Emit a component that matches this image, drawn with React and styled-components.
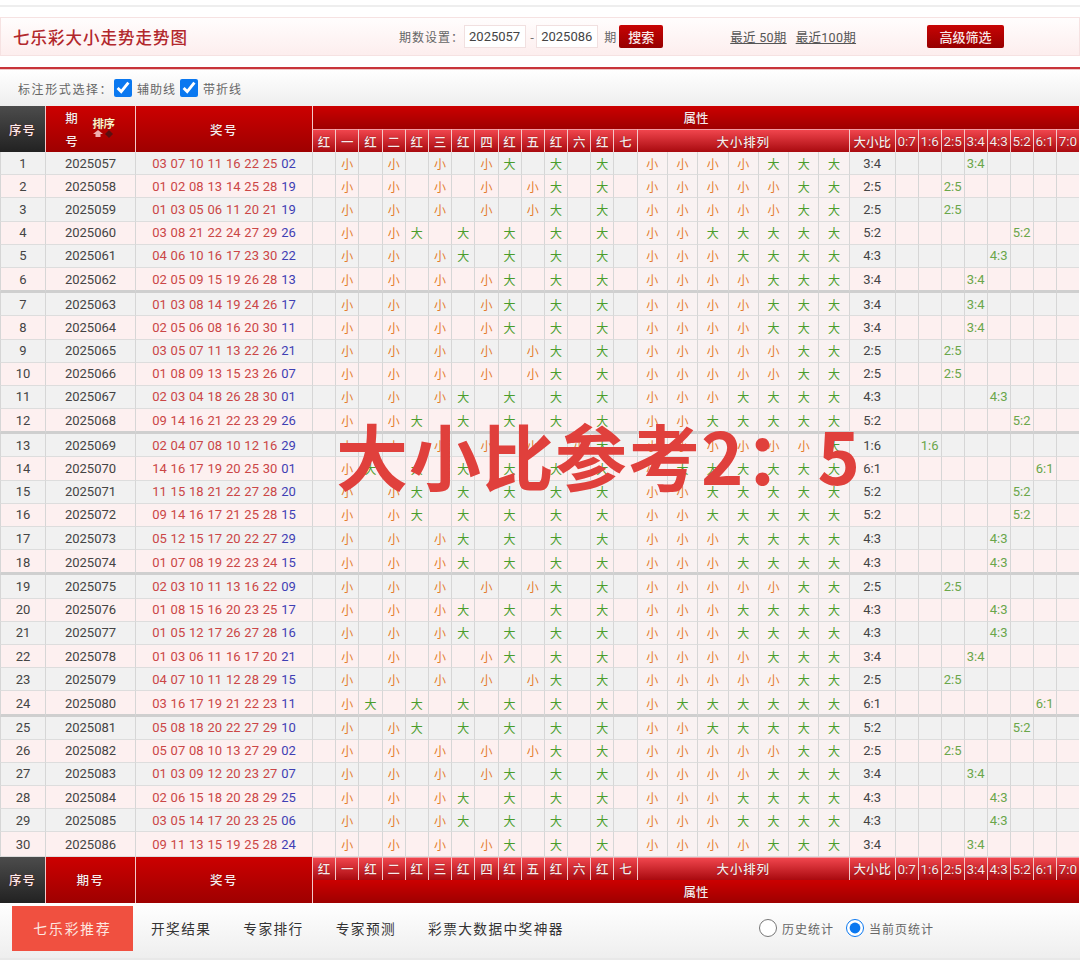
import React from "react";
import styled, { createGlobalStyle } from "styled-components";

const Global = createGlobalStyle`
  html, body { margin: 0; padding: 0; background: #fff; }
  body { font-family: Roboto, "Noto Sans CJK SC", sans-serif; color: #444; }
`;

const raw = `03 07 10 11 16 22 25 02
01 02 08 13 14 25 28 19
01 03 05 06 11 20 21 19
03 08 21 22 24 27 29 26
04 06 10 16 17 23 30 22
02 05 09 15 19 26 28 13
01 03 08 14 19 24 26 17
02 05 06 08 16 20 30 11
03 05 07 11 13 22 26 21
01 08 09 13 15 23 26 07
02 03 04 18 26 28 30 01
09 14 16 21 22 23 29 26
02 04 07 08 10 12 16 29
14 16 17 19 20 25 30 01
11 15 18 21 22 27 28 20
09 14 16 17 21 25 28 15
05 12 15 17 20 22 27 29
01 07 08 19 22 23 24 15
02 03 10 11 13 16 22 09
01 08 15 16 20 23 25 17
01 05 12 17 26 27 28 16
01 03 06 11 16 17 20 21
04 07 10 11 12 28 29 15
03 16 17 19 21 22 23 11
05 08 18 20 22 27 29 10
05 07 08 10 13 27 29 02
01 03 09 12 20 23 27 07
02 06 15 18 20 28 29 25
03 05 14 17 20 23 25 06
09 11 13 15 19 25 28 24`;

const rows = raw.split("\n").map((line, i) => {
  const nums = line.split(" ");
  const reds = nums.slice(0, 7);
  const flags = reds.map((n) => Number(n) >= 16);
  const big = flags.filter(Boolean).length;
  return {
    index: i + 1,
    period: 2025057 + i,
    reds,
    blue: nums[7],
    flags,
    big,
    ratio: `${big}:${7 - big}`,
  };
});

const positions = ["一", "二", "三", "四", "五", "六", "七"];
const ratios = ["0:7", "1:6", "2:5", "3:4", "4:3", "5:2", "6:1", "7:0"];

const Page = styled.div`
  width: 1080px;
  height: 975px;
  overflow: hidden;
  display: flex;
  flex-direction: column;
`;
const TopRule = styled.div`
  height: 5px;
  border-bottom: 2px solid #eeeeee;
  margin-bottom: 10px;
`;
const Toolbar = styled.div`
  height: 37px;
  display: flex;
  align-items: center;
  border: 1px solid #f6e2e2;
  background: linear-gradient(#fffdfd, #fdeeee);
  font-family: "Noto Sans CJK SC", sans-serif;
  font-size: 12px;
  color: #666;
`;
const Title = styled.h1`
  margin: 0 0 0 12px;
  width: 386px;
  font-size: 16.5px;
  font-weight: 500;
  letter-spacing: 1px;
  color: #b2282c;
`;
const Label = styled.span`
  letter-spacing: 1px;
  white-space: nowrap;
  margin-left: ${(p) => p.$left || 0}px;
`;
const PeriodInput = styled.input`
  box-sizing: border-box;
  width: 62px;
  height: 23px;
  margin-left: ${(p) => p.$left || 0}px;
  padding: 0 4px;
  border: 1px solid #f1e0e0;
  background: #fff;
  font: 13px Roboto, sans-serif;
  color: #444;
  outline: none;
`;
const RedButton = styled.button`
  box-sizing: border-box;
  width: ${(p) => p.$width}px;
  height: 23px;
  margin-left: ${(p) => p.$left}px;
  padding: 0;
  border: 0;
  border-radius: 2px;
  background: linear-gradient(#c80404, #960000);
  color: #f8e8e8;
  font: 500 13px "Noto Sans CJK SC", sans-serif;
`;
const TopLink = styled.a`
  margin-left: ${(p) => p.$left}px;
  color: #555;
  font: 12.5px Roboto, "Noto Sans CJK SC", sans-serif;
  letter-spacing: 0.3px;
  text-decoration: underline;
  white-space: nowrap;
`;
const RedRule = styled.div`
  height: 3px;
  margin-top: 11px;
  background: #c8343a;
  border-bottom: 1px solid #f0c8c8;
  box-sizing: border-box;
`;
const OptionBar = styled.div`
  height: 36px;
  display: flex;
  align-items: center;
  padding-left: 18px;
  background: linear-gradient(#ffffff, #eeeeee);
  font: 12px "Noto Sans CJK SC", sans-serif;
  color: #666;
  letter-spacing: 1px;
`;
const OptionTitle = styled.span`
  width: 90px;
  letter-spacing: 1.6px;
  white-space: nowrap;
`;
const Check = styled.input`
  width: 18px;
  height: 18px;
  margin: 0 5px 0 ${(p) => p.$left}px;
  accent-color: #0a78f0;
`;
const TableArea = styled.div`
  position: relative;
`;
const Table = styled.table`
  width: 1079px;
  table-layout: fixed;
  border-collapse: separate;
  border-spacing: 0;
`;
const HeadCell = styled.th`
  box-sizing: border-box;
  padding: 0;
  height: 23px;
  border-left: 1px solid #f3c9c9;
  background: linear-gradient(#cc0000, #9e0000);
  color: #fbeaea;
  font: 500 12.5px "Noto Sans CJK SC", sans-serif;
  letter-spacing: ${(p) => (p.$wide ? "1.5px" : "0")};
  white-space: nowrap;
  text-shadow: 0 0 1px #600;
`;
const DarkCell = styled(HeadCell)`
  border-left: 0;
  background: linear-gradient(#4c4c4c, #222222);
  letter-spacing: 1px;
`;
const SubCell = styled(HeadCell)`
  height: 23px;
  border-top: 1px solid #f39aa0;
  background: linear-gradient(#f0454d, #a90a0f);
  letter-spacing: ${(p) => (p.$wide ? "0.8px" : "0")};
  font-weight: ${(p) => (p.$digits ? 400 : 500)};
  font-family: ${(p) =>
    p.$digits ? "Roboto, sans-serif" : '"Noto Sans CJK SC", sans-serif'};
  font-size: ${(p) => (p.$digits ? "13.5px" : "12.5px")};
`;
const SortWrap = styled.div`
  display: flex;
  align-items: center;
  justify-content: center;
  gap: 14px;
  padding-right: 2px;
`;
const StackedName = styled.div`
  width: 14px;
  line-height: 23px;
  white-space: normal;
`;
const SortBox = styled.div`
  display: flex;
  flex-direction: column;
  align-items: center;
  margin-top: -3px;
  font-size: 11.5px;
  font-weight: 700;
  line-height: 13px;
  color: #fff2c8;
  letter-spacing: -0.5px;
`;
const Row = styled.tr`
  background: ${(p) => (p.$even ? "#fdf0f0" : "#f1f1f1")};
`;
const cellHeight = (kind) =>
  kind === "end" ? "25.2px" : kind === "last" ? "24.2px" : "23.2px";
const Cell = styled.td`
  box-sizing: border-box;
  height: ${(p) => cellHeight(p.$kind)};
  padding: ${(p) => (p.$kind === "end" ? "1.5px" : "0")} 0 0;
  text-align: center;
  border-left: 1px solid #d6d6d6;
  border-bottom: ${(p) => (p.$kind === "end" ? "3px" : "1px")} solid
    ${(p) => (p.$kind === "end" ? "#cfcfcf" : "#dddddd")};
  font-size: 13px;
  line-height: 1;
  color: #444;
  white-space: nowrap;
`;
const NumberCell = styled(Cell)`
  word-spacing: 0.6px;
`;
const SortedCell = styled(Cell)`
  background: #f9f2f2;
`;
const Red = styled.span`
  color: #cb4646;
`;
const Blue = styled.span`
  color: #3f3fb4;
`;
const Mark = styled.span`
  font: 12px "Noto Sans CJK SC", sans-serif;
  color: ${(p) => (p.$big ? "#4a9d2c" : "#e47c2c")};
`;
const RatioMark = styled.span`
  color: #6aa64a;
`;
const Stamp = styled.div`
  position: absolute;
  left: 336px;
  top: 306px;
  font: 700 72px "Noto Sans CJK SC", sans-serif;
  line-height: 84px;
  letter-spacing: 1px;
  color: #e0403c;
  white-space: nowrap;
  pointer-events: none;
`;
const Footer = styled.div`
  box-sizing: border-box;
  height: 57px;
  padding: 0 0 4px 12px;
  display: flex;
  align-items: center;
  background: linear-gradient(#ffffff, #eeeeee);
  border-bottom: 2px solid #e8e8e8;
  font: 13.7px "Noto Sans CJK SC", sans-serif;
  letter-spacing: 1.4px;
  color: #333;
`;
const ActiveTab = styled.div`
  width: 121px;
  height: 45px;
  display: flex;
  align-items: center;
  justify-content: center;
  background: #f05040;
  color: #fde8e0;
  letter-spacing: 2px;
`;
const Tab = styled.div`
  margin-left: ${(p) => p.$left}px;
  white-space: nowrap;
`;
const Radio = styled.input`
  width: 18px;
  height: 18px;
  margin: 0 5px 0 ${(p) => p.$left}px;
  accent-color: #0a78f0;
`;
const RadioLabel = styled.span`
  font-size: 12px;
  letter-spacing: 1px;
  color: #666;
`;

function Arrows() {
  return (
    <svg width="22" height="8" viewBox="0 0 22 8">
      <path d="M5 0l5 4H7.5v3h-5V4H0z" fill="#f0b0b0" />
      <path d="M16 0l4 4-4 4-4-4z" fill="#5a1010" />
    </svg>
  );
}

function PositionCells({ row, kind }) {
  return row.flags.flatMap((isBig, i) => [
    <Cell key={`r${i}`} $kind={kind}>
      {isBig && <Mark $big>大</Mark>}
    </Cell>,
    <Cell key={`p${i}`} $kind={kind}>
      {!isBig && <Mark>小</Mark>}
    </Cell>,
  ]);
}

function SubHeader() {
  return (
    <>
      {positions.flatMap((p) => [
        <SubCell key={`h${p}`}>红</SubCell>,
        <SubCell key={p}>{p}</SubCell>,
      ])}
      <SubCell colSpan={7} $wide>大小排列</SubCell>
      <SubCell>大小比</SubCell>
      {ratios.map((r) => (
        <SubCell key={r} $digits>{r}</SubCell>
      ))}
    </>
  );
}

export default function App() {
  return (
    <Page>
      <Global />
      <TopRule />
      <Toolbar>
        <Title>七乐彩大小走势走势图</Title>
        <Label>期数设置：</Label>
        <PeriodInput defaultValue="2025057" readOnly />
        <Label $left={4}>-</Label>
        <PeriodInput defaultValue="2025086" readOnly $left={1} />
        <Label $left={6}>期</Label>
        <RedButton $width={44} $left={2}>搜索</RedButton>
        <TopLink href="#" $left={67}>最近 50期</TopLink>
        <TopLink href="#" $left={9}>最近100期</TopLink>
        <RedButton $width={77} $left={71}>高级筛选</RedButton>
      </Toolbar>
      <RedRule />
      <OptionBar>
        <OptionTitle>标注形式选择：</OptionTitle>
        <Check type="checkbox" defaultChecked $left={6} />
        <span>辅助线</span>
        <Check type="checkbox" defaultChecked $left={4} />
        <span>带折线</span>
      </OptionBar>
      <TableArea>
        <Table>
          <colgroup>
            <col style={{ width: 45 }} />
            <col style={{ width: 90 }} />
            <col style={{ width: 177 }} />
            {Array.from({ length: 14 }, (_, i) => <col key={i} style={{ width: 23.2 }} />)}
            {Array.from({ length: 7 }, (_, i) => <col key={i} style={{ width: 30.3 }} />)}
            <col style={{ width: 46 }} />
            {Array.from({ length: 8 }, (_, i) => <col key={i} style={{ width: 23 }} />)}
          </colgroup>
          <thead>
            <tr>
              <DarkCell rowSpan={2}>序号</DarkCell>
              <HeadCell rowSpan={2}>
                <SortWrap>
                  <StackedName>期号</StackedName>
                  <SortBox>
                    排序
                    <Arrows />
                  </SortBox>
                </SortWrap>
              </HeadCell>
              <HeadCell rowSpan={2} $wide>奖号</HeadCell>
              <HeadCell colSpan={30}>属性</HeadCell>
            </tr>
            <tr>
              <SubHeader />
            </tr>
          </thead>
          <tbody>
            {rows.map((row) => {
              const kind =
                row.index === 30 ? "last" : row.index % 6 === 0 ? "end" : "plain";
              return (
                <Row key={row.index} $even={row.index % 2 === 0}>
                  <Cell $kind={kind}>{row.index}</Cell>
                  <Cell $kind={kind}>{row.period}</Cell>
                  <NumberCell $kind={kind}>
                    <Red>{row.reds.join(" ")}</Red> <Blue>{row.blue}</Blue>
                  </NumberCell>
                  <PositionCells row={row} kind={kind} />
                  {Array.from({ length: 7 }, (_, i) => (
                    <SortedCell key={i} $kind={kind}>
                      <Mark $big={i >= 7 - row.big}>{i >= 7 - row.big ? "大" : "小"}</Mark>
                    </SortedCell>
                  ))}
                  <Cell $kind={kind}>{row.ratio}</Cell>
                  {ratios.map((r) => (
                    <Cell key={r} $kind={kind}>
                      {r === row.ratio && <RatioMark>{r}</RatioMark>}
                    </Cell>
                  ))}
                </Row>
              );
            })}
          </tbody>
          <tfoot>
            <tr>
              <DarkCell rowSpan={2}>序号</DarkCell>
              <HeadCell rowSpan={2} $wide>期号</HeadCell>
              <HeadCell rowSpan={2} $wide>奖号</HeadCell>
              <SubHeader />
            </tr>
            <tr>
              <HeadCell colSpan={30}>属性</HeadCell>
            </tr>
          </tfoot>
        </Table>
        <Stamp>大小比参考2：5</Stamp>
      </TableArea>
      <Footer>
        <ActiveTab>七乐彩推荐</ActiveTab>
        <Tab $left={18}>开奖结果</Tab>
        <Tab $left={32}>专家排行</Tab>
        <Tab $left={32}>专家预测</Tab>
        <Tab $left={32}>彩票大数据中奖神器</Tab>
        <Radio type="radio" name="stat" $left={195} />
        <RadioLabel>历史统计</RadioLabel>
        <Radio type="radio" name="stat" defaultChecked $left={12} />
        <RadioLabel>当前页统计</RadioLabel>
      </Footer>
    </Page>
  );
}
